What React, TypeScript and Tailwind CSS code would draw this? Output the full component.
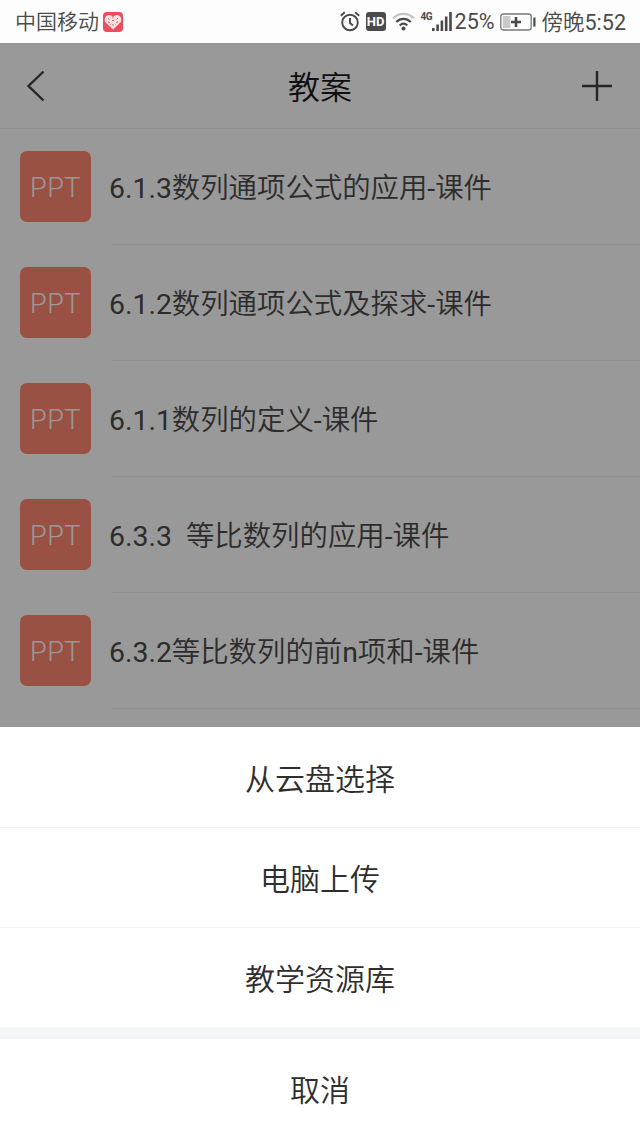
const lessons = [
    "6.1.3数列通项公式的应用-课件",
    "6.1.2数列通项公式及探求-课件",
    "6.1.1数列的定义-课件",
    "6.3.3  等比数列的应用-课件",
    "6.3.2等比数列的前n项和-课件",
]

const actions = ["从云盘选择", "电脑上传", "教学资源库"]

function StatusBar() {
    return (
        <div className="flex h-[43px] shrink-0 items-center bg-[#fdfdfd] pl-[15px] pr-[14px] text-[#4a4a4a]">
            <span className="pt-[2px] text-[21px] leading-none">中国移动</span>
            <svg className="ml-[4px] h-5 w-5" viewBox="0 0 20 20">
                <rect width="20" height="20" rx="4" fill="#ee4b5e" />
                <path d="M10 17.500 2.500 10.500C.5 7.500 2.500 3 6 3c2 0 3.300 1 4 2.300C10.700 4 12 3 14 3c3.500 0 5.500 4.500 3.500 7.500z" fill="#fbe3e0" />
                <path d="M5 6l1.500 1.500M9 8.500h2M15 6l-1.500 1.500M5 10l2 .5M10 12v2M15 10l-2 .5M10 5.500v1M7.500 12.500l.8-.8M12.500 12.500l-.8-.8" stroke="#ee4b5e" strokeWidth=".9" />
            </svg>

            <div className="ml-auto flex items-center">
                {/* Alarm */}
                <svg className="h-[21px] w-5" viewBox="0 0 20 21" fill="none" stroke="#4a4a4a" strokeWidth="1.900">
                    <circle cx="10" cy="11.500" r="7.800" />
                    <path d="M10 7v5l3 2.500M.8 4.800 4.800 1.200M15.200 1.200l4 3.600" />
                </svg>
                <span className="ml-[6px] flex h-[19px] w-5 items-center justify-center rounded-[3px] bg-[#4a4a4a] text-[13px] font-bold leading-none text-white">
                    HD
                </span>
                {/* Wifi */}
                <svg className="ml-[6px] h-[19px] w-[23px]" viewBox="0 0 23 19" fill="none" strokeWidth="2.200">
                    <path d="M1 6.500C7 .3 16 .3 22 6.500" stroke="#c4c4c4" />
                    <path d="M4.300 10C8.500 5.800 14.500 5.800 18.700 10M7.700 13.500c2.300-2.200 5.300-2.200 7.600 0" stroke="#4a4a4a" />
                    <circle cx="11.500" cy="16.600" r="2" fill="#4a4a4a" />
                </svg>
                {/* Signal */}
                <span className="ml-[6px] h-[19px] w-[11px] text-[10px] font-bold leading-[10px] tracking-[-0.5px]">4G</span>
                <svg className="h-[19px] w-5" viewBox="0 0 20 19" fill="#4a4a4a">
                    <rect x="0" y="16" width="2.600" height="3" />
                    <rect x="4.300" y="12.500" width="2.600" height="6.500" />
                    <rect x="8.600" y="8.500" width="2.600" height="10.500" />
                    <rect x="12.900" y="4.500" width="2.600" height="14.500" />
                    <rect x="17.200" y="0" width="2.600" height="19" />
                </svg>
                <span className="ml-[3px] text-[21.5px] leading-none">25%</span>
                {/* Battery */}
                <svg className="ml-[5px] h-[18px] w-9" viewBox="0 0 36 18">
                    <rect x=".8" y="1" width="30.400" height="16" rx="2.500" fill="none" stroke="#777" strokeWidth="1.300" />
                    <rect x="2.800" y="3" width="7.500" height="12" fill="#c9c9c9" />
                    <path d="M16 4v10M11 9h10" stroke="#4a4a4a" strokeWidth="2.600" />
                    <rect x="33.300" y="4.500" width="2.200" height="9" fill="#4a4a4a" />
                </svg>
                <span className="ml-[6px] pt-[2px] text-[21.5px] leading-none">傍晚5:52</span>
            </div>
        </div>
    )
}

export default function App() {
    return (
        <div className="flex h-[1138px] w-[640px] flex-col overflow-hidden bg-white font-['Roboto','Noto_Sans_CJK_SC_DemiLight','Noto_Sans_CJK_SC',sans-serif]">
            <StatusBar />

            {/* Lesson list, dimmed while the sheet is open */}
            <main className="relative h-[684px] shrink-0 overflow-hidden bg-white">
                <header className="flex h-[86px] items-center justify-between border-b border-[#f0f0f0] pl-[26px] pr-[28px]">
                    <svg className="h-8 w-[30px]" viewBox="0 0 30 32" fill="none" stroke="#404040" strokeWidth="2.400">
                        <path d="M17.500 1.500 2.500 16l15 14.500" />
                    </svg>
                    <h1 className="pl-[2px] pt-[5px] text-[32px] leading-none text-[#1a1a1a]">教案</h1>
                    <svg className="h-[30px] w-[30px]" viewBox="0 0 30 30" stroke="#404040" strokeWidth="2.400">
                        <path d="M15 0v30M0 15h30" />
                    </svg>
                </header>

                <ul>
                    {lessons.map((title) => (
                        <li key={title} className="flex h-[116px] pl-5">
                            <div className="mt-[22px] flex h-[71px] w-[71px] shrink-0 items-center justify-center rounded-[7px] bg-[#ff8770] pt-[3px] text-[27px] font-light leading-none tracking-[0.6px] text-white">
                                PPT
                            </div>
                            <div className="ml-5 flex flex-1 items-center border-b border-[#f0f0f0] pt-[6px]">
                                <span className="-ml-[2px] whitespace-pre text-[28.4px] leading-none text-[#4a4a4a]">{title}</span>
                            </div>
                        </li>
                    ))}
                </ul>

                <div className="absolute inset-0 bg-black/40" />
            </main>

            {/* Action sheet */}
            <div className="flex flex-1 flex-col bg-[#f3f5f8] text-[30px] leading-none text-[#2e2e2e]">
                {actions.map((label) => (
                    <button key={label} className="flex h-[100px] w-full items-center justify-center border-t border-[#f3f3f5] bg-white pt-[4px] first:border-white">
                        {label}
                    </button>
                ))}
                <button className="mt-[12px] flex w-full flex-1 items-center justify-center bg-white pt-[4px]">取消</button>
            </div>
        </div>
    )
}
